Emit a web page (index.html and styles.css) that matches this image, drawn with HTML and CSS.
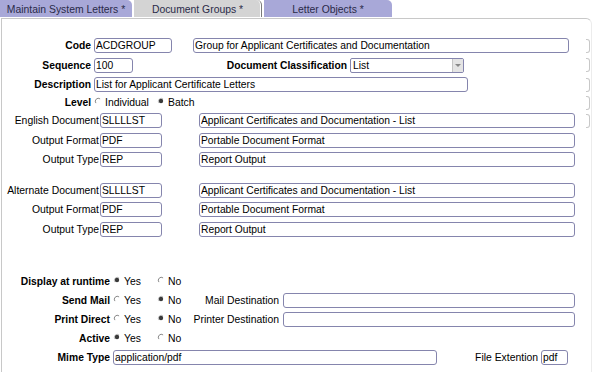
FILE: index.html
```html
<!DOCTYPE html>
<html lang="en">
<head>
  <meta charset="UTF-8" />
  <title>Document Groups</title>
  <link rel="stylesheet" href="styles.css">
</head>
<body>

  <div class="tabs">
    <div class="tab tab-first">Maintain System Letters *</div>
    <div class="tab active">Document Groups *</div>
    <div class="tab">Letter Objects *</div>
  </div>

  <div class="panel">
    <!-- group header -->
    <div class="row">
      <span class="lbl b lbl-a">Code</span>
      <input class="field w-code" value="ACDGROUP">
      <input class="field w-long gap-a" value="Group for Applicant Certificates and Documentation">
      <span class="clip"></span>
    </div>
    <div class="row">
      <span class="lbl b lbl-a">Sequence</span>
      <input class="field w-seq" value="100">
      <span class="lbl b lbl-class">Document Classification</span>
      <div class="select">
        <span class="select-text">List</span>
        <span class="select-btn"><i></i></span>
      </div>
      <span class="clip"></span>
    </div>
    <div class="row">
      <span class="lbl b lbl-a">Description</span>
      <input class="field w-desc" value="List for Applicant Certificate Letters">
      <span class="clip"></span>
    </div>
    <div class="row row-short">
      <span class="lbl b lbl-a">Level</span>
      <span class="opt opt-level">
        <svg class="radio" viewBox="0 0 8 8"><path d="M1.9 6.1A3 3 0 0 1 6.1 1.9" fill="none" stroke="#8a8a8a"/></svg>Individual
      </span>
      <span class="opt">
        <svg class="radio" viewBox="0 0 8 8"><path d="M1.9 6.1A3 3 0 0 1 6.1 1.9" fill="none" stroke="#c4c4c4"/><circle cx="4" cy="4" r="2.2" fill="#3a3a3a"/></svg>Batch
      </span>
      <span class="clip"></span>
    </div>

    <!-- documents -->
    <div class="row">
      <span class="lbl lbl-doc">English Document</span>
      <input class="field w-doc" value="SLLLLST">
      <input class="field w-long gap-doc" value="Applicant Certificates and Documentation - List">
      <span class="clip"></span>
    </div>
    <div class="row">
      <span class="lbl lbl-doc">Output Format</span>
      <input class="field w-doc" value="PDF">
      <input class="field w-long gap-doc" value="Portable Document Format">
    </div>
    <div class="row">
      <span class="lbl lbl-doc">Output Type</span>
      <input class="field w-doc" value="REP">
      <input class="field w-long gap-doc" value="Report Output">
    </div>

    <div class="spacer-s"></div>

    <div class="row">
      <span class="lbl lbl-doc">Alternate Document</span>
      <input class="field w-doc" value="SLLLLST">
      <input class="field w-long gap-doc" value="Applicant Certificates and Documentation - List">
    </div>
    <div class="row">
      <span class="lbl lbl-doc">Output Format</span>
      <input class="field w-doc" value="PDF">
      <input class="field w-long gap-doc" value="Portable Document Format">
    </div>
    <div class="row">
      <span class="lbl lbl-doc">Output Type</span>
      <input class="field w-doc" value="REP">
      <input class="field w-long gap-doc" value="Report Output">
    </div>

    <div class="spacer-l"></div>

    <!-- options -->
    <div class="row row-c">
      <span class="lbl b lbl-c">Display at runtime</span>
      <div class="radios">
        <span class="opt opt-yes">
          <svg class="radio" viewBox="0 0 8 8"><path d="M1.9 6.1A3 3 0 0 1 6.1 1.9" fill="none" stroke="#c4c4c4"/><circle cx="4" cy="4" r="2.2" fill="#3a3a3a"/></svg>Yes
        </span>
        <span class="opt">
          <svg class="radio" viewBox="0 0 8 8"><path d="M1.9 6.1A3 3 0 0 1 6.1 1.9" fill="none" stroke="#8a8a8a"/></svg>No
        </span>
      </div>
    </div>
    <div class="row row-c">
      <span class="lbl b lbl-c">Send Mail</span>
      <div class="radios">
        <span class="opt opt-yes">
          <svg class="radio" viewBox="0 0 8 8"><path d="M1.9 6.1A3 3 0 0 1 6.1 1.9" fill="none" stroke="#8a8a8a"/></svg>Yes
        </span>
        <span class="opt">
          <svg class="radio" viewBox="0 0 8 8"><path d="M1.9 6.1A3 3 0 0 1 6.1 1.9" fill="none" stroke="#c4c4c4"/><circle cx="4" cy="4" r="2.2" fill="#3a3a3a"/></svg>No
        </span>
      </div>
      <span class="lbl lbl-dest">Mail Destination</span>
      <input class="field w-dest" value="">
    </div>
    <div class="row row-c">
      <span class="lbl b lbl-c">Print Direct</span>
      <div class="radios">
        <span class="opt opt-yes">
          <svg class="radio" viewBox="0 0 8 8"><path d="M1.9 6.1A3 3 0 0 1 6.1 1.9" fill="none" stroke="#8a8a8a"/></svg>Yes
        </span>
        <span class="opt">
          <svg class="radio" viewBox="0 0 8 8"><path d="M1.9 6.1A3 3 0 0 1 6.1 1.9" fill="none" stroke="#c4c4c4"/><circle cx="4" cy="4" r="2.2" fill="#3a3a3a"/></svg>No
        </span>
      </div>
      <span class="lbl lbl-dest">Printer Destination</span>
      <input class="field w-dest" value="">
    </div>
    <div class="row row-c">
      <span class="lbl b lbl-c">Active</span>
      <div class="radios">
        <span class="opt opt-yes">
          <svg class="radio" viewBox="0 0 8 8"><path d="M1.9 6.1A3 3 0 0 1 6.1 1.9" fill="none" stroke="#c4c4c4"/><circle cx="4" cy="4" r="2.2" fill="#3a3a3a"/></svg>Yes
        </span>
        <span class="opt">
          <svg class="radio" viewBox="0 0 8 8"><path d="M1.9 6.1A3 3 0 0 1 6.1 1.9" fill="none" stroke="#8a8a8a"/></svg>No
        </span>
      </div>
    </div>
    <div class="row row-c">
      <span class="lbl b lbl-c">Mime Type</span>
      <input class="field w-mime" value="application/pdf">
      <span class="lbl lbl-ext">File Extention</span>
      <input class="field w-ext" value="pdf">
    </div>
  </div>

</body>
</html>
```

FILE: styles.css
```css
body {
  margin: 0;
  background: #fff;
  color: #000;
  font-family: "Liberation Sans", Arial, sans-serif;
  font-size: 10.4px;
}

/* tabs */
.tabs {
  display: flex;
  gap: 2px;
  height: 17px;
  margin-bottom: 1px;
}

.tab {
  box-sizing: border-box;
  width: 128px;
  padding-top: 2px;
  background: #a8a8d8;
  color: #2a2a48;
  border-top-right-radius: 5px;
  display: flex;
  align-items: center;
  justify-content: center;
  white-space: nowrap;
}

.tab-first {
  width: 132px;
}

.tab.active {
  background: #d4d4d4;
  border-right: 1px solid #7a7a7a;
  box-shadow: inset -1px 0 #fff;
}

/* panel */
.panel {
  box-sizing: border-box;
  width: 591px;
  height: 354px;
  margin-left: 1px;
  padding-top: 17px;
  border-top: 1px solid #c8c8c8;
  border-left: 1px solid #c8c8c8;
  border-right: 1px solid #ececec;
  border-top-right-radius: 6px;
}

.row {
  display: flex;
  align-items: center;
  height: 19.5px;
}

.row-short {
  height: 16.5px;
}

.row-c {
  height: 19px;
}

.spacer-s {
  height: 11px;
}

.spacer-l {
  height: 32.5px;
}

/* labels */
.lbl {
  flex: none;
  text-align: right;
  white-space: nowrap;
}

.b {
  font-weight: bold;
  font-size: 10.3px;
}

.lbl-a {
  width: 89px;
  margin-right: 3px;
}

.lbl-doc {
  width: 97px;
  margin-right: 1px;
}

.lbl-c {
  width: 108px;
  margin-right: 3px;
}

.lbl-class {
  width: 214px;
  margin-right: 3px;
}

.lbl-dest {
  width: 89px;
  margin-right: 4px;
}

.lbl-ext {
  width: 101px;
  margin-right: 3px;
}

/* inputs */
.field {
  flex: none;
  box-sizing: border-box;
  height: 15px;
  margin: 0;
  padding: 0 1px;
  border: 1px solid #8585ad;
  border-radius: 3px;
  background: #fff;
  color: #000;
  font: 10.3px "Liberation Sans", Arial, sans-serif;
  outline: none;
}

.w-code { width: 78px; }
.w-seq { width: 39px; }
.w-desc { width: 374px; }
.w-long { width: 376px; }
.w-doc { width: 62px; }
.w-dest { width: 292px; }
.w-mime { width: 324px; }
.w-ext { width: 27px; }

.gap-a { margin-left: 21px; }
.gap-doc { margin-left: 37px; }

.select {
  flex: none;
  box-sizing: border-box;
  width: 114px;
  height: 15px;
  display: flex;
  border: 1px solid #8585ad;
  border-radius: 2px;
  font-size: 10.3px;
}

.select-text {
  flex: 1;
  padding-left: 2px;
  line-height: 13px;
}

.select-btn {
  width: 10px;
  background: #e4e4e4;
  border-left: 1px solid #c4c4c4;
  display: flex;
  align-items: center;
  justify-content: center;
}

.select-btn i {
  width: 0;
  height: 0;
  border-left: 3px solid transparent;
  border-right: 3px solid transparent;
  border-top: 3px solid #888;
}

/* clipped edge of the next column */
.clip {
  flex: none;
  box-sizing: border-box;
  width: 4px;
  height: 14px;
  margin-left: auto;
  margin-right: 1px;
  border: 1px solid #c8c8c8;
  border-left: none;
  border-radius: 0 3px 3px 0;
}

/* radios */
.radios {
  flex: none;
  width: 77px;
  display: flex;
}

.opt {
  flex: none;
  display: flex;
  align-items: center;
  gap: 3px;
  white-space: nowrap;
}

.opt-level {
  width: 63px;
}

.opt-yes {
  width: 44px;
}

.radio {
  flex: none;
  width: 8px;
  height: 8px;
  margin-bottom: 3px;
}
```
